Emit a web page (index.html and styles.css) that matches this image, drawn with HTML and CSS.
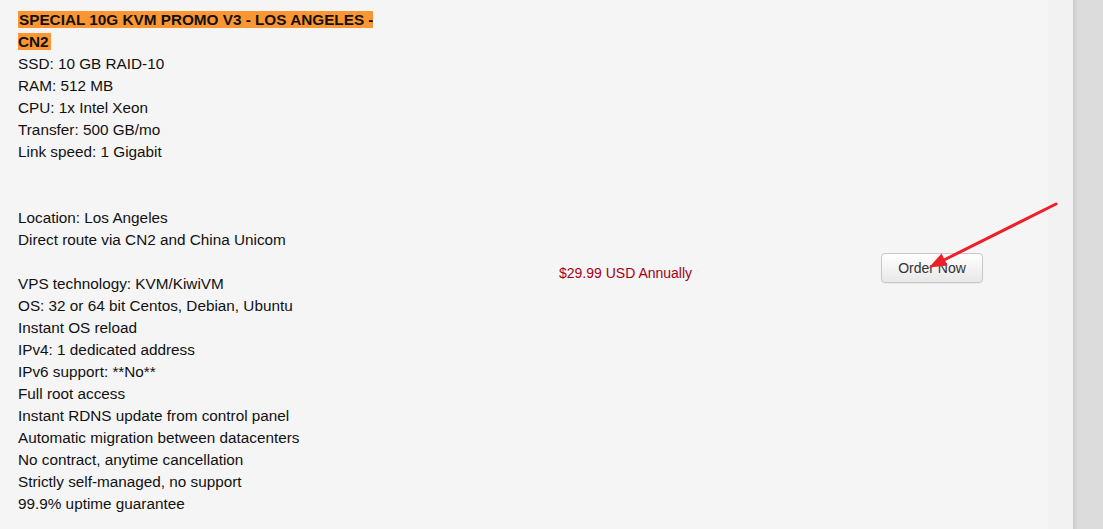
FILE: index.html
```html
<!DOCTYPE html>
<html>
<head>
<meta charset="utf-8">
<link rel="stylesheet" href="styles.css">
</head>
<body>
<div class="page">
  <main class="main">
    <div class="row">
      <div class="desc">
        <div class="title"><span class="hl">SPECIAL 10G KVM PROMO V3 - LOS ANGELES - CN2</span></div>
        <div>SSD: 10 GB RAID-10</div>
        <div>RAM: 512 MB</div>
        <div>CPU: 1x Intel Xeon</div>
        <div>Transfer: 500 GB/mo</div>
        <div>Link speed: 1 Gigabit</div>
        <div class="blank"></div>
        <div class="blank"></div>
        <div>Location: Los Angeles</div>
        <div>Direct route via CN2 and China Unicom</div>
        <div class="blank"></div>
        <div>VPS technology: KVM/KiwiVM</div>
        <div>OS: 32 or 64 bit Centos, Debian, Ubuntu</div>
        <div>Instant OS reload</div>
        <div>IPv4: 1 dedicated address</div>
        <div>IPv6 support: **No**</div>
        <div>Full root access</div>
        <div>Instant RDNS update from control panel</div>
        <div>Automatic migration between datacenters</div>
        <div>No contract, anytime cancellation</div>
        <div>Strictly self-managed, no support</div>
        <div>99.9% uptime guarantee</div>
      </div>
      <div class="price">$29.99 USD Annually</div>
      <div class="action"><button class="btn">Order Now</button></div>
    </div>
  </main>
  <div class="strip"></div>
  <div class="scroll"></div>
</div>
<svg class="arrow" width="1103" height="529" viewBox="0 0 1103 529">
  <line x1="1056" y1="204" x2="942" y2="261" stroke="#ee1f27" stroke-width="3" stroke-linecap="round"/>
  <polygon points="929,267.5 947.5,265.5 941.5,253.5" fill="#ee1f27"/>
</svg>
</body>
</html>
```

FILE: styles.css
```css
html, body {
  margin: 0;
  padding: 0;
  height: 529px;
  overflow: hidden;
}
body {
  background: #f5f5f5;
  font-family: "Liberation Sans", Arial, sans-serif;
  font-size: 14px;
  line-height: 22px;
  color: #111;
  position: relative;
}
.page {
  display: flex;
  height: 529px;
}
.main {
  width: 1048px;
  flex: none;
  background: #f5f5f5;
}
.strip {
  width: 25px;
  flex: none;
  background: #f2f2f2;
}
.scroll {
  flex: 1;
  background: linear-gradient(to right, #c9c9c9 0, #d6d6d6 3px, #dcdcdc 6px, #dcdcdc 100%);
}
.row {
  display: grid;
  grid-template-columns: 541px 322px 120px;
  align-items: center;
  padding: 8px 0 0 18px;
}
.desc {
  width: 362px;
  font-size: 15.3px;
  padding-top: 1px;
  padding-bottom: 13px;
}
.blank {
  height: 22px;
}
.title {
  font-weight: bold;
}
.hl {
  background: #fc9632;
  padding-left: 1px;
  padding-right: 2px;
}
.price {
  color: #a3001a;
  padding-top: 10px;
}
.action {
  display: flex;
}
.btn {
  font-family: "Liberation Sans", Arial, sans-serif;
  font-size: 14px;
  color: #333;
  width: 102px;
  height: 30px;
  padding: 0;
  border: 1px solid #c8c8c8;
  border-radius: 4px;
  background: linear-gradient(to bottom, #ffffff 0%, #e8e8e8 100%);
  box-shadow: 0 1px 1px rgba(0,0,0,0.05);
}
.arrow {
  position: absolute;
  left: 0;
  top: 0;
  pointer-events: none;
}
```
